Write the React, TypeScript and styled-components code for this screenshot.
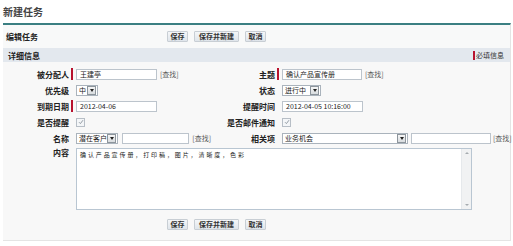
import React from "react";
import styled, {createGlobalStyle} from "styled-components";

const GlobalStyle = createGlobalStyle`
    html, body {
        margin: 0;
        padding: 0;
        background: #FFFFFF;
        font-family: "Liberation Sans", "Noto Sans CJK SC", sans-serif;
        color: #333333;
    }
`;

const CJK = `"Noto Sans CJK SC", "Liberation Sans", sans-serif`;
const RED = "#b8122e";

const Page = styled.div`
    width: 513px;
    height: 246px;
    padding: 0 2px 0 3px;
    box-sizing: border-box;
    overflow: hidden;
`;

const Title = styled.h1`
    margin: 0;
    height: 23px;
    line-height: 23px;
    font-family: ${CJK};
    font-size: 10px;
    font-weight: 700;
    color: #444444;
`;

const Panel = styled.div`
    border-top: 2px solid #3b7f82;
    border-right: 1px solid #e4e4e4;
    border-bottom: 1px solid #e4e4e4;
    background: #f8f8f8;
`;

const PanelHeader = styled.div`
    display: flex;
    align-items: center;
    height: 23px;
    padding-left: 3px;
    background: #f8f9f9;
`;

const Heading = styled.h2`
    margin: 0;
    width: 161px;
    font-family: ${CJK};
    font-size: 8px;
    font-weight: 700;
    color: #222222;
`;

const ButtonBar = styled.div`
    display: flex;
    gap: 6px;
    margin-left: ${({$offset}: {$offset: number}) => $offset}px;
`;

const Button = styled.button`
    height: 11px;
    width: ${({$w}: {$w: number}) => $w}px;
    padding: 0;
    border: 1px solid #c8ced4;
    border-radius: 1px;
    background: linear-gradient(#f4f6f8, #dfe5eb);
    font-family: ${CJK};
    font-size: 7px;
    font-weight: 700;
    line-height: 9px;
    color: #333333;
`;

const SectionHeader = styled.div`
    display: flex;
    align-items: center;
    justify-content: space-between;
    height: 14px;
    padding: 0 6px 0 5px;
    background: #e3e8ee;
    font-family: ${CJK};
    font-size: 8px;
    font-weight: 700;
    color: #222222;
`;

const Legend = styled.span`
    display: flex;
    align-items: center;
    font-size: 7px;
    font-weight: 400;
    color: #333333;
`;

const Mark = styled.span`
    flex: 0 0 2px;
    width: 2px;
    height: ${({$h}: {$h?: number}) => $h ?? 12}px;
    margin-right: ${({$mr}: {$mr?: number}) => $mr ?? 3}px;
    background: ${({$on}: {$on?: boolean}) => $on ? RED : "transparent"};
`;

const FormGrid = styled.div`
    display: grid;
    grid-template-columns: 66px 140px 62px 1fr;
    grid-auto-rows: 16px;
    column-gap: 2px;
    padding-top: 4px;
`;

const Label = styled.div`
    display: flex;
    align-items: ${({$top}: {$top?: boolean}) => $top ? "flex-start" : "center"};
    justify-content: flex-end;
    padding-top: ${({$top}: {$top?: boolean}) => $top ? 1 : 0}px;
    font-family: ${CJK};
    font-size: 8px;
    font-weight: 700;
    color: #222222;
    white-space: nowrap;
`;

const Field = styled.div`
    display: flex;
    align-items: ${({$top}: {$top?: boolean}) => $top ? "flex-start" : "center"};
    grid-column: ${({$span}: {$span?: string}) => $span ?? "auto"};
    grid-row: ${({$tall}: {$tall?: boolean}) => $tall ? "span 4" : "auto"};
    padding-top: ${({$top}: {$top?: boolean}) => $top ? 2 : 0}px;
    white-space: nowrap;
`;

const Input = styled.div`
    box-sizing: border-box;
    width: ${({$w}: {$w: number}) => $w}px;
    height: 11px;
    margin-left: ${({$ml}: {$ml?: number}) => $ml ?? 0}px;
    padding-left: 3px;
    border: 1px solid #bcc4cc;
    background: #FFFFFF;
    font-family: ${CJK};
    font-size: 7px;
    line-height: 9px;
    color: #222222;
`;

const Lookup = styled.span`
    margin-left: ${({$ml}: {$ml?: number}) => $ml ?? 3}px;
    font-family: ${CJK};
    font-size: 7px;
    color: #555555;
`;

const Select = styled.div`
    box-sizing: border-box;
    display: flex;
    align-items: center;
    justify-content: space-between;
    width: ${({$w}: {$w: number}) => $w}px;
    height: 11px;
    padding: 0 1px 0 2px;
    border: 1px solid #aab3bc;
    background: #FFFFFF;
    font-family: ${CJK};
    font-size: 7px;
    color: #222222;
`;

const Arrow = styled.span`
    display: flex;
    align-items: center;
    justify-content: center;
    width: 7px;
    height: 7px;
    border: 1px solid #8d959c;
    background: linear-gradient(#f6f6f6, #d8dcdf);

    &::after {
        content: "";
        border-left: 2px solid transparent;
        border-right: 2px solid transparent;
        border-top: 3px solid #222222;
    }
`;

const Check = styled.span`
    display: flex;
    align-items: center;
    justify-content: center;
    width: 7px;
    height: 7px;
    border: 1px solid #b7bec6;
    background: #f4f6f8;
`;

const TextBox = styled.div`
    display: flex;
    width: 396px;
    height: 62px;
    box-sizing: border-box;
    border: 1px solid #b9c6d2;
    background: #FFFFFF;
`;

const TextArea = styled.textarea`
    flex: 1;
    margin: 0;
    padding: 2px 3px;
    border: 0;
    outline: none;
    resize: none;
    background: transparent;
    font-family: "Noto Sans CJK SC", serif;
    font-size: 6px;
    letter-spacing: 1.9px;
    line-height: 8px;
    color: #222222;
`;

const ScrollTrack = styled.div`
    display: flex;
    flex-direction: column;
    justify-content: space-between;
    align-items: center;
    width: 9px;
    padding: 3px 0;
    border-left: 1px solid #e6e9ec;
    background: #f1f2f3;
`;

const ScrollArrow = styled.span`
    border-left: 2px solid transparent;
    border-right: 2px solid transparent;
    ${({$up}: {$up?: boolean}) => $up ? "border-bottom: 2px solid #a6abb0;" : "border-top: 2px solid #a6abb0;"}
`;

const Footer = styled.div`
    height: 30px;
    padding-top: 9px;
    box-sizing: border-box;
`;

function Buttons({offset}: {offset: number}) {
    return (
        <ButtonBar $offset={offset}>
            <Button $w={21}>保存</Button>
            <Button $w={45}>保存并新建</Button>
            <Button $w={21}>取消</Button>
        </ButtonBar>
    );
}

function CheckBox() {
    return (
        <Check>
            <svg width="6" height="6" viewBox="0 0 6 6">
                <path d="M1 3.2 L2.4 4.6 L5 1.2" fill="none" stroke="#8a939c" strokeWidth="0.9" />
            </svg>
        </Check>
    );
}

export default function App() {
    return (
        <>
            <GlobalStyle />
            <Page>
                <Title>新建任务</Title>
                <Panel>
                    <PanelHeader>
                        <Heading>编辑任务</Heading>
                        <Buttons offset={0} />
                    </PanelHeader>
                    <SectionHeader>
                        <span>详细信息</span>
                        <Legend><Mark $on $h={9} $mr={1} />必填信息</Legend>
                    </SectionHeader>
                    <FormGrid>
                        <Label>被分配人</Label>
                        <Field><Mark $on /><Input $w={81}>王建亭</Input><Lookup>[查找]</Lookup></Field>
                        <Label>主题</Label>
                        <Field><Mark $on /><Input $w={80}>确认产品宣传册</Input><Lookup>[查找]</Lookup></Field>

                        <Label>优先级</Label>
                        <Field><Mark /><Select $w={22}>中<Arrow /></Select></Field>
                        <Label>状态</Label>
                        <Field><Mark /><Select $w={39}>进行中<Arrow /></Select></Field>

                        <Label>到期日期</Label>
                        <Field><Mark $on /><Input $w={81}>2012-04-06</Input></Field>
                        <Label>提醒时间</Label>
                        <Field><Mark /><Input $w={81}>2012-04-05 10:16:00</Input></Field>

                        <Label>是否提醒</Label>
                        <Field><Mark /><CheckBox /></Field>
                        <Label>是否邮件通知</Label>
                        <Field><Mark /><CheckBox /></Field>

                        <Label>名称</Label>
                        <Field><Mark /><Select $w={46}>潜在客户<Arrow /></Select><Input $w={80} $ml={4} /><Lookup>[查找]</Lookup></Field>
                        <Label>相关项</Label>
                        <Field><Mark /><Select $w={126}>业务机会<Arrow /></Select><Input $w={80} $ml={3} /><Lookup $ml={2}>[查找]</Lookup></Field>

                        <Label $top>内容</Label>
                        <Field $span="2 / 5" $tall $top>
                            <Mark />
                            <TextBox>
                                <TextArea defaultValue="确认产品宣传册，打印稿，图片，清晰度，色彩" />
                                <ScrollTrack><ScrollArrow $up /><ScrollArrow /></ScrollTrack>
                            </TextBox>
                        </Field>
                    </FormGrid>
                    <Footer><Buttons offset={164} /></Footer>
                </Panel>
            </Page>
        </>
    );
}
